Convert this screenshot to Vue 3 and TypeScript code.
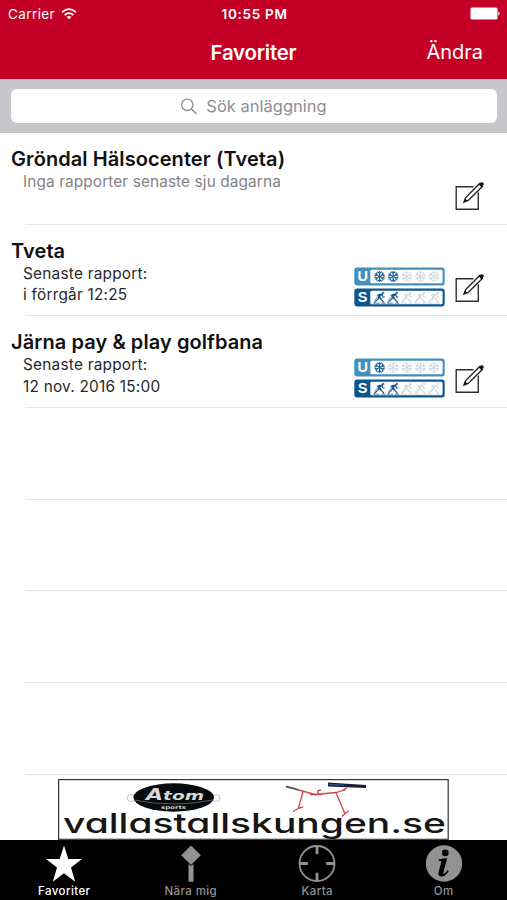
<script setup lang="ts">
interface Facility {
  name: string
  lines: string[]
  muted?: boolean
  snow?: number
  ski?: number
}

const facilities: Facility[] = [
  { name: 'Gröndal Hälsocenter (Tveta)', lines: ['Inga rapporter senaste sju dagarna'], muted: true },
  { name: 'Tveta', lines: ['Senaste rapport:', 'i förrgår 12:25'], snow: 2, ski: 2 },
  { name: 'Järna pay & play golfbana', lines: ['Senaste rapport:', '12 nov. 2016 15:00'], snow: 1, ski: 2 },
]
const emptyRows = 4
const slots = [0, 1, 2, 3, 4]
</script>

<template>
  <div class="screen">
    <header class="header">
      <div class="status">
        <div class="carrier">
          <span>Carrier</span>
          <svg width="16" height="12" viewBox="0 0 16 12">
            <g fill="none" stroke="#fff" stroke-width="1.7">
              <path d="M1 4.3Q8-1.9 15 4.3" />
              <path d="M3.6 7Q8 3.2 12.4 7" />
            </g>
            <path d="M5.6 8.9Q8 7 10.4 8.9L8 11.3z" fill="#fff" />
          </svg>
        </div>
        <span class="clock">10:55 PM</span>
        <svg class="battery" width="31" height="13" viewBox="0 0 31 13">
          <rect x="0.5" y="0.5" width="27" height="12" rx="1.5" fill="#fff" />
          <path d="M28.4 4.3Q31 6.5 28.4 8.7z" fill="#fff" />
        </svg>
      </div>
      <div class="nav">
        <span></span>
        <h1>Favoriter</h1>
        <span class="change">Ändra</span>
      </div>
    </header>

    <div class="search">
      <div class="field">
        <svg width="18" height="17" viewBox="0 0 18 17" fill="none" stroke="#8e8e93">
          <circle cx="7.3" cy="6.8" r="5.7" stroke-width="1.3" />
          <path d="M11.4 11L16.5 16" stroke-width="1.7" />
        </svg>
        <span>Sök anläggning</span>
      </div>
    </div>

    <main class="list">
      <section v-for="f in facilities" :key="f.name" class="row">
        <div class="info">
          <h2>{{ f.name }}</h2>
          <p v-for="line in f.lines" :key="line" :class="{ muted: f.muted }">{{ line }}</p>
        </div>
        <div v-if="f.snow" class="badges">
          <svg width="91" height="19" viewBox="0 0 91 19">
            <rect x="0.3" y="0.5" width="90.4" height="18" rx="3" fill="#438fbd" />
            <rect x="16.3" y="2.8" width="72.3" height="13.4" rx="1.5" fill="#fff" />
            <text x="8.7" y="14.3" class="letter">U</text>
            <g
              v-for="i in slots"
              :key="i"
              :transform="`translate(${25.6 + i * 13.6} 9.5)`"
              :stroke="i < f.snow ? '#21659b' : '#ccd3e0'"
              :stroke-width="i < f.snow ? 1.15 : 0.9"
              fill="none"
            >
              <g v-for="a in [0, 60, 120, 180, 240, 300]" :key="a" :transform="`rotate(${a})`">
                <path d="M0 0V-5.4M-2.1-4.8L0-3L2.1-4.8" />
              </g>
            </g>
          </svg>
          <svg width="91" height="19" viewBox="0 0 91 19">
            <rect x="0.3" y="0.5" width="90.4" height="18" rx="3" fill="#0b568c" />
            <rect x="16.3" y="2.8" width="72.3" height="13.4" rx="1.5" fill="#fff" />
            <text x="8.7" y="14.3" class="letter">S</text>
            <g
              v-for="i in slots"
              :key="i"
              :transform="`translate(${19.6 + i * 13.6} 4)`"
              :stroke="i < (f.ski ?? 0) ? '#17558a' : '#ccd1de'"
              fill="none"
            >
              <circle cx="9.6" cy="1" r="0.8" stroke-width="1" />
              <path :stroke-width="i < (f.ski ?? 0) ? 2 : 1" d="M9 1.8L5.4 4L7.2 7" />
              <path stroke-width="1.1" d="M5.6 4L4.6 7L0.6 10.6M7 6.6L10.6 10.6M8.2 2.6L9.4 5L11.2 5M6.6 2L3.4 3.6" />
              <path stroke-width="0.7" d="M1 8.6L6.2 2.6M-0.4 11.2H6M7.6 11.2H12" />
            </g>
          </svg>
        </div>
        <svg class="edit" width="30" height="30" viewBox="0 0 30 30">
          <path d="M18.5 5.8H1.2V28.3H23.3V11.5" fill="none" stroke="#303030" stroke-width="1.4" />
          <path d="M9 21L10.5 16.8L24.6 2.6L27.4 5.4L13.2 19.4z" fill="#fff" stroke="#242424" stroke-width="1.4" />
          <path d="M23.8 3.4L26 1.3Q27.7.8 28.5 2.3Q29 3.4 28 4.6L26.4 6.2z" fill="#111" />
          <path d="M9 21L10.1 17.5L12.5 19.8z" fill="#111" />
        </svg>
      </section>
      <div v-for="n in emptyRows" :key="n" class="row"></div>
    </main>

    <div class="ad">
      <svg width="391" height="61" viewBox="0 0 391 61">
        <rect x="0.6" y="0.6" width="389.6" height="59.7" fill="#fff" stroke="#333" stroke-width="1.2" />
        <ellipse cx="73" cy="19" rx="4" ry="3.5" fill="none" stroke="#aaa" stroke-width="0.7" />
        <ellipse cx="158" cy="19" rx="4" ry="3.5" fill="none" stroke="#aaa" stroke-width="0.7" />
        <ellipse cx="115.7" cy="18.5" rx="40.3" ry="14.2" fill="#080b0d" />
        <path d="M76 21Q116 29 155 21" fill="none" stroke="#73777a" stroke-width="0.7" />
        <text x="88" y="20.7" class="logo" font-size="16" textLength="17" lengthAdjust="spacingAndGlyphs">A</text>
        <text x="105" y="20.7" class="logo" font-size="11.5" textLength="41" lengthAdjust="spacingAndGlyphs">tom</text>
        <text x="103" y="30.2" class="sports" textLength="25" lengthAdjust="spacingAndGlyphs">sports</text>
        <g fill="none" stroke="#d2424b" stroke-width="1.3">
          <path d="M239 10.5L257 15.5L278 13.5L288 10.5M245 12.5L240.5 29M235 32.5L241 29L245 28M278 13.5L287 35M284 37.5L287 34.5L291 32" />
          <path d="M252 15.7H264M260 16V11.5L263 11M285 11L289 9" />
        </g>
        <path d="M228 6.5L239 9.5L241 11.8L228 8.5z" fill="#5d4e50" />
        <path d="M270 3.6L308 6V9L270 7.4z" fill="#171d34" />
        <path d="M271 5.4L286 6.3" stroke="#454a89" stroke-width="1.3" />
        <text x="5" y="53.6" class="slogan" textLength="383" lengthAdjust="spacingAndGlyphs">vallastallskungen.se</text>
      </svg>
    </div>

    <footer class="tabs">
      <div class="tab active">
        <svg width="38" height="38" viewBox="0 0 38 38">
          <path d="M19 .5L23.3 14H37L26 22.4L30.2 36.7L19 28.2L7.8 36.7L12 22.4L1 14H14.7z" fill="#fff" />
        </svg>
        <span>Favoriter</span>
      </div>
      <div class="tab">
        <svg width="38" height="38" viewBox="0 0 38 38" fill="#929292">
          <path d="M19 .6L28.8 10.3L19 20L9.2 10.3z" />
          <path d="M16.5 19L19 21L21.5 19V36.7H16.5z" />
        </svg>
        <span>Nära mig</span>
      </div>
      <div class="tab">
        <svg width="38" height="38" viewBox="0 0 38 38" fill="none" stroke="#929292">
          <circle cx="19" cy="18.5" r="17.5" stroke-width="1.8" />
          <path d="M19 1V9.3M19 27.7V36M1.5 18.5H9.8M28.2 18.5H36.5" stroke-width="2.8" />
        </svg>
        <span>Karta</span>
      </div>
      <div class="tab">
        <svg width="38" height="38" viewBox="0 0 38 38">
          <circle cx="19" cy="18.5" r="18.2" fill="#929292" />
          <circle cx="20.3" cy="7.9" r="3.3" fill="#000" />
          <path d="M13.7 14.2L22.2 13L18.4 27.4Q18 29.4 19.4 28.5Q21 27.5 22.5 25.2L23.8 26Q20.1 32 15.9 31.5Q12.6 31 13.7 26.7L16.2 17.3Q16.8 15.4 13.3 15.6z" fill="#000" />
        </svg>
        <span>Om</span>
      </div>
    </footer>
  </div>
</template>

<style>
body {
  margin: 0;
}
</style>

<style scoped>
.screen {
  width: 507px;
  height: 900px;
  display: flex;
  flex-direction: column;
  overflow: hidden;
  background: #fff;
  font-family: Inter, "Liberation Sans", sans-serif;
  color: #111;
}
.header {
  height: 79px;
  flex: none;
  background: #c40026;
  color: #fff;
}
.status {
  height: 27px;
  display: grid;
  grid-template-columns: 1fr auto 1fr;
  align-items: center;
  padding: 0 6px 0 8px;
  box-sizing: border-box;
  font-size: 13.5px;
}
.carrier {
  display: flex;
  align-items: center;
  gap: 6px;
  letter-spacing: 0.4px;
}
.clock {
  font-weight: 600;
  letter-spacing: 0.7px;
}
.battery {
  justify-self: end;
}
.nav {
  height: 50px;
  display: grid;
  grid-template-columns: 1fr auto 1fr;
  align-items: center;
  padding: 0 24px;
}
h1,
h2,
p {
  margin: 0;
}
h1 {
  font-size: 20.4px;
  font-weight: 600;
  letter-spacing: -0.2px;
}
.change {
  justify-self: end;
  font-size: 20px;
}
.search {
  height: 54px;
  flex: none;
  box-sizing: border-box;
  padding: 10px 10px 10px 11px;
  background: #c8c8cc;
}
.field {
  height: 34px;
  border-radius: 6px;
  background: #fff;
  display: flex;
  align-items: center;
  justify-content: center;
  gap: 8px;
  padding-right: 1px;
  box-sizing: border-box;
  font-size: 16.5px;
  color: #8e8e93;
}
.list {
  height: 642px;
  flex: none;
}
.row {
  height: 91.7px;
  box-sizing: border-box;
  display: flex;
  align-items: flex-start;
  background: linear-gradient(#e4e4e6, #e4e4e6) 25px 100% / 100% 1px no-repeat;
}
.info {
  flex: 1;
  padding: 14px 0 0 11px;
}
h2 {
  font-size: 20px;
  line-height: 24px;
  font-weight: 600;
  letter-spacing: 0.08px;
  white-space: nowrap;
}
p {
  padding-left: 12px;
  font-size: 15.4px;
  line-height: 21.5px;
  letter-spacing: 0.22px;
  color: #292929;
}
p.muted {
  letter-spacing: 0.1px;
  line-height: 22.5px;
  color: #838383;
}
.badges {
  display: flex;
  flex-direction: column;
  gap: 2px;
  padding: 42px 10px 0 0;
}
.letter {
  font: bold 14.5px "Liberation Sans", sans-serif;
  fill: #fff;
  text-anchor: middle;
}
.edit {
  flex: none;
  margin: 48px 22px 0 0;
}
.ad {
  height: 65px;
  flex: none;
  display: flex;
  padding: 4px 0 0 58px;
  box-sizing: border-box;
}
.logo {
  font-family: "DejaVu Sans", sans-serif;
  font-weight: bold;
  font-style: italic;
  fill: #d8d8d8;
}
.sports {
  font: bold 5px "DejaVu Sans", sans-serif;
  fill: #ccc;
}
.slogan {
  font-family: Inter, sans-serif;
  font-size: 27px;
  font-weight: 500;
  font-feature-settings: "cv11" 1, "ss02" 0;
  fill: #161616;
}
.tabs {
  height: 60px;
  flex: none;
  display: grid;
  grid-template-columns: repeat(4, 126.5px);
  padding-left: 1px;
  box-sizing: border-box;
  background: #000;
}
.tab {
  display: flex;
  flex-direction: column;
  align-items: center;
  padding-top: 5px;
  color: #929292;
  font-size: 11.5px;
  font-weight: 500;
  line-height: 17px;
  letter-spacing: 0.4px;
}
.tab.active {
  color: #fff;
}
</style>
